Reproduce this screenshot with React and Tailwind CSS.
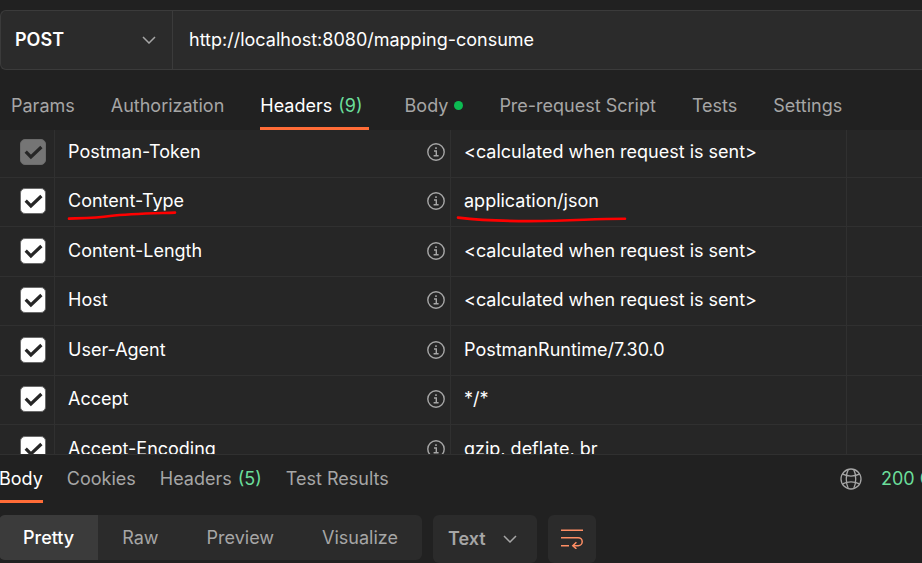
import React, { useState } from "react";

const REQUEST_TABS = [
  { name: "Params" },
  { name: "Authorization" },
  { name: "Headers", count: 9 },
  { name: "Body", dot: true },
  { name: "Pre-request Script" },
  { name: "Tests" },
  { name: "Settings" },
];

const RESPONSE_TABS = [
  { name: "Body" },
  { name: "Cookies" },
  { name: "Headers", count: 5 },
  { name: "Test Results" },
];

const VIEWS = ["Pretty", "Raw", "Preview", "Visualize"];

const HEADERS = [
  { key: "Postman-Token", value: "<calculated when request is sent>", locked: true },
  { key: "Content-Type", value: "application/json", marked: true },
  { key: "Content-Length", value: "<calculated when request is sent>" },
  { key: "Host", value: "<calculated when request is sent>" },
  { key: "User-Agent", value: "PostmanRuntime/7.30.0" },
  { key: "Accept", value: "*/*" },
  { key: "Accept-Encoding", value: "gzip, deflate, br" },
];

function Chevron({ className }) {
  return (
    <svg viewBox="0 0 14 8" className={`pointer-events-none absolute h-2 w-3.5 ${className}`} fill="none" stroke="#a6a6a6" strokeWidth="1.5">
      <path d="M1 1l6 6 6-6" />
    </svg>
  );
}

function InfoIcon() {
  return (
    <svg viewBox="0 0 18 18" className="size-[18px]" fill="none" stroke="#a6a6a6" strokeWidth="1.4">
      <circle cx="9" cy="9" r="8.2" />
      <path d="M7 8h2.3v4.8M6.6 12.8h5" />
      <path d="M8.2 5.2h1.6" strokeWidth="1.7" />
    </svg>
  );
}

function GlobeIcon() {
  return (
    <svg viewBox="0 0 22 22" className="size-[22px]" fill="none" stroke="#a6a6a6" strokeWidth="1.3">
      <circle cx="11" cy="11" r="10" />
      <path d="M8.3 1.4C5.6 7 5.6 15 8.3 20.6M13.7 1.4c2.7 5.6 2.7 13.6 0 19.2" />
      <path d="M2.5 6.2c5 2.2 12 2.2 17 0M2.5 15.8c5-2.2 12-2.2 17 0" />
    </svg>
  );
}

function WrapIcon() {
  return (
    <svg viewBox="0 0 22 20" className="h-5 w-[22px]" fill="none" stroke="#ff8e64" strokeWidth="1.5">
      <path d="M0 1.2h22M0 8.7h17.2a4 4 0 0 1 0 8h-5M0 16.7h8" />
      <path d="M15.4 13.2l-3.6 3.5 3.6 3.2" />
    </svg>
  );
}

function Check({ label, locked }) {
  return (
    <label className="relative mx-auto block size-[26px]">
      <input
        type="checkbox"
        aria-label={label}
        defaultChecked
        disabled={locked}
        className="peer block size-[26px] appearance-none rounded-[5px] border border-[#6b6b6b] bg-[#2b2b2b] checked:bg-white disabled:bg-[#757575]"
      />
      <svg
        viewBox="0 0 26 26"
        className="pointer-events-none absolute inset-0 hidden peer-checked:block"
        fill="none"
        stroke="#262626"
        strokeWidth="3.2"
      >
        <path d="M5.7 12.7l5.2 5.2L21.4 8" />
      </svg>
    </label>
  );
}

function Tab({ tab, active, onClick, className = "" }) {
  return (
    <button
      type="button"
      role="tab"
      aria-selected={active}
      onClick={onClick}
      className={`flex shrink-0 items-center gap-1.5 border-b-[3px] whitespace-nowrap ${className} ${
        active ? "border-[#ff6c37] text-white" : "border-transparent text-[#a6a6a6]"
      }`}
    >
      {tab.name}
      {tab.count && <span className="text-[#6bdd9a]">({tab.count})</span>}
      {tab.dot && <span className="size-[9px] rounded-full bg-[#0cbb52]" />}
    </button>
  );
}

export default function App() {
  const [requestTab, setRequestTab] = useState("Headers");
  const [responseTab, setResponseTab] = useState("Body");
  const [view, setView] = useState("Pretty");

  return (
    <main className="flex h-screen flex-col overflow-hidden bg-[#212121] pt-2.5 font-['Inter',sans-serif] text-lg leading-6 text-white">
      {/* Method and URL */}
      <form className="flex h-[60px] shrink-0 rounded-l-md border border-r-0 border-[#3b3b3b] bg-[#2b2b2b]">
        <div className="relative flex w-[172px] shrink-0 items-center border-r border-[#3b3b3b]">
          <select aria-label="Method" className="h-full w-full appearance-none pl-3.5 font-semibold outline-none">
            <option>POST</option>
            <option>GET</option>
            <option>PUT</option>
            <option>DELETE</option>
          </select>
          <Chevron className="right-4" />
        </div>
        <input
          type="text"
          aria-label="Request URL"
          defaultValue="http://localhost:8080/mapping-consume"
          className="min-w-0 flex-1 px-4 outline-none"
        />
      </form>

      {/* Request tabs */}
      <div role="tablist" className="flex h-[60px] shrink-0 gap-9 pt-3.5 pl-[11px]">
        {REQUEST_TABS.map((tab) => (
          <Tab
            key={tab.name}
            tab={tab}
            active={requestTab === tab.name}
            onClick={() => setRequestTab(tab.name)}
            className={tab.count ? "pr-1.5" : ""}
          />
        ))}
      </div>

      {/* Headers */}
      <section className="min-h-0 flex-1 overflow-hidden bg-[#262626]">
        <table className="-mt-0.5 w-full table-fixed border-separate border-spacing-0">
          <colgroup>
            <col className="w-[55px]" />
            <col />
            <col />
            <col className="w-[75px]" />
          </colgroup>
          <tbody>
            {HEADERS.map((row) => (
              <tr
                key={row.key}
                className="odd:h-[50px] even:h-[49px] *:border-b *:border-[#303030] *:p-0 *:pb-0.5"
              >
                <td className="border-r pl-3!">
                  <Check label={row.key} locked={row.locked} />
                </td>
                <td className="border-r">
                  <div className="flex items-center justify-between pr-[5px] pl-[13px]">
                    <span className="relative">
                      {row.key}
                      {row.marked && (
                        <svg viewBox="0 0 110 10" className="absolute top-full left-0 h-2.5 w-[110px] overflow-visible" fill="none" stroke="#f00" strokeWidth="2.6" strokeLinecap="round">
                          <path d="M1 5.600C18 5 30 4.800 42 3C62 0.600 82 0.400 107 -0.400" />
                        </svg>
                      )}
                    </span>
                    <InfoIcon />
                  </div>
                </td>
                <td className="border-r">
                  <span className="relative ml-[13px]">
                    {row.value}
                    {row.marked && (
                      <svg viewBox="0 0 172 12" className="absolute top-full -left-2 h-3 w-[172px]" fill="none" stroke="#f00" strokeWidth="2.6" strokeLinecap="round">
                        <path d="M2 6.600C40 11 90 10.500 128 8.800C142 8.200 155 7.800 169 7.800" />
                      </svg>
                    )}
                  </span>
                </td>
                <td />
              </tr>
            ))}
          </tbody>
        </table>
      </section>

      {/* Response */}
      <section className="-ml-px shrink-0 border-t border-[#303030]">
        <div className="flex h-12 items-stretch justify-between">
          <div role="tablist" className="flex gap-6">
            {RESPONSE_TABS.map((tab) => (
              <Tab
                key={tab.name}
                tab={tab}
                active={responseTab === tab.name}
                onClick={() => setResponseTab(tab.name)}
                className="pt-0.5"
              />
            ))}
          </div>
          <div className="flex w-[82px] shrink-0 items-center gap-[19px] overflow-hidden whitespace-nowrap text-[#6bdd9a]">
            <span className="shrink-0">
              <GlobeIcon />
            </span>
            <span>200 OK</span>
          </div>
        </div>

        <div className="mt-3 flex items-start gap-[11px] text-[#a6a6a6]">
          <div className="flex h-[45px] overflow-hidden rounded-md bg-[#2b2b2b]">
            {VIEWS.map((name) => (
              <button
                key={name}
                type="button"
                onClick={() => setView(name)}
                className={`px-6 ${view === name ? "bg-[#3b3b3b] font-medium text-white" : ""}`}
              >
                {name}
              </button>
            ))}
          </div>
          <div className="relative flex h-12 w-[104px] items-center rounded-md bg-[#2b2b2b]">
            <select aria-label="Format" className="h-full w-full appearance-none pl-[15px] font-semibold outline-none">
              <option>Text</option>
              <option>JSON</option>
              <option>XML</option>
              <option>HTML</option>
            </select>
            <Chevron className="right-5" />
          </div>
          <button type="button" aria-label="Wrap lines" className="grid size-12 place-items-center rounded-md bg-[#2b2b2b]">
            <WrapIcon />
          </button>
        </div>
      </section>
    </main>
  );
}
